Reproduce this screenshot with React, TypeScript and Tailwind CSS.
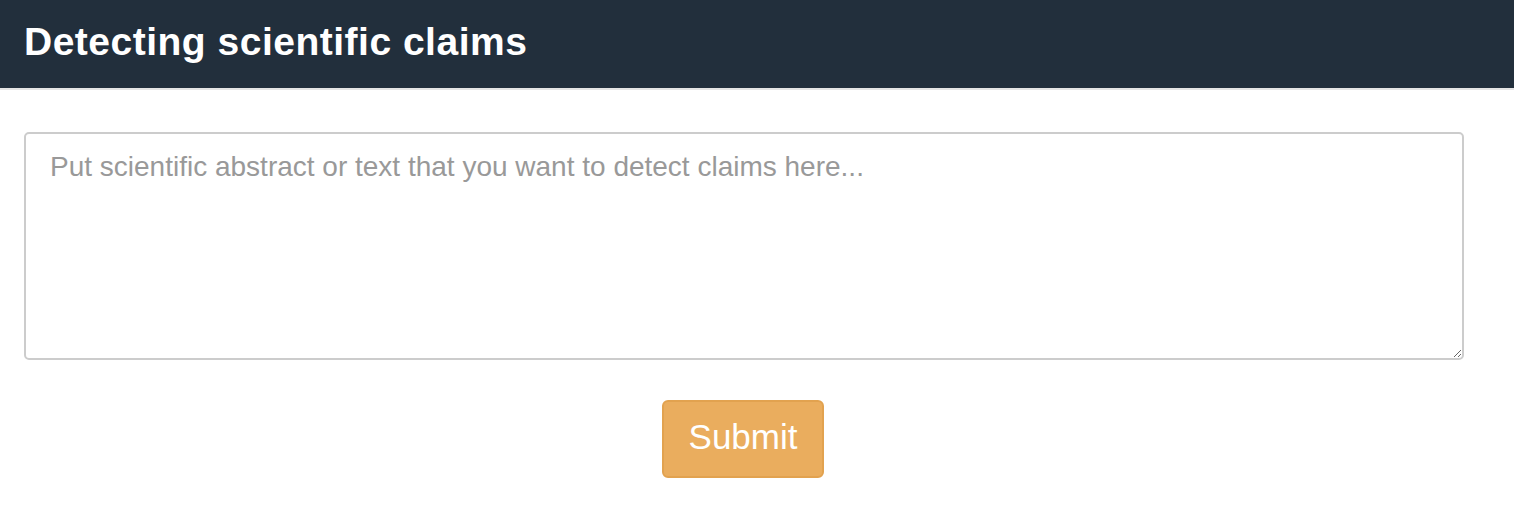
export default function App() {
  return (
    <div className="min-h-screen bg-white font-['Liberation_Sans',Arial,sans-serif]">
      <header className="h-[90px] bg-[#222f3c] border-b-2 border-[#e5e5e5] px-6 pt-[22px]">
        <h1 className="text-[39px] font-bold text-white leading-none tracking-[0.5px]">Detecting scientific claims</h1>
      </header>
      <main className="pl-6 pt-[42px]">
        <div className="w-[1440px] flex flex-col items-center">
          <textarea
            className="w-full h-[228px] border-2 border-[#cccccc] rounded-[5px] pl-[24px] pr-4 pt-[13px] pb-[12px] text-[28px] leading-[40px] text-[#555] placeholder:text-[#999999] outline-none resize-y"
            placeholder="Put scientific abstract or text that you want to detect claims here..."
          />
          <button className="mt-[40px] mr-[2px] w-[162px] h-[78px] pb-[5px] flex items-center justify-center bg-[#eaad5e] border-2 border-[#e2a24f] rounded-[6px] text-white text-[35px] leading-none">
            Submit
          </button>
        </div>
      </main>
    </div>
  );
}
